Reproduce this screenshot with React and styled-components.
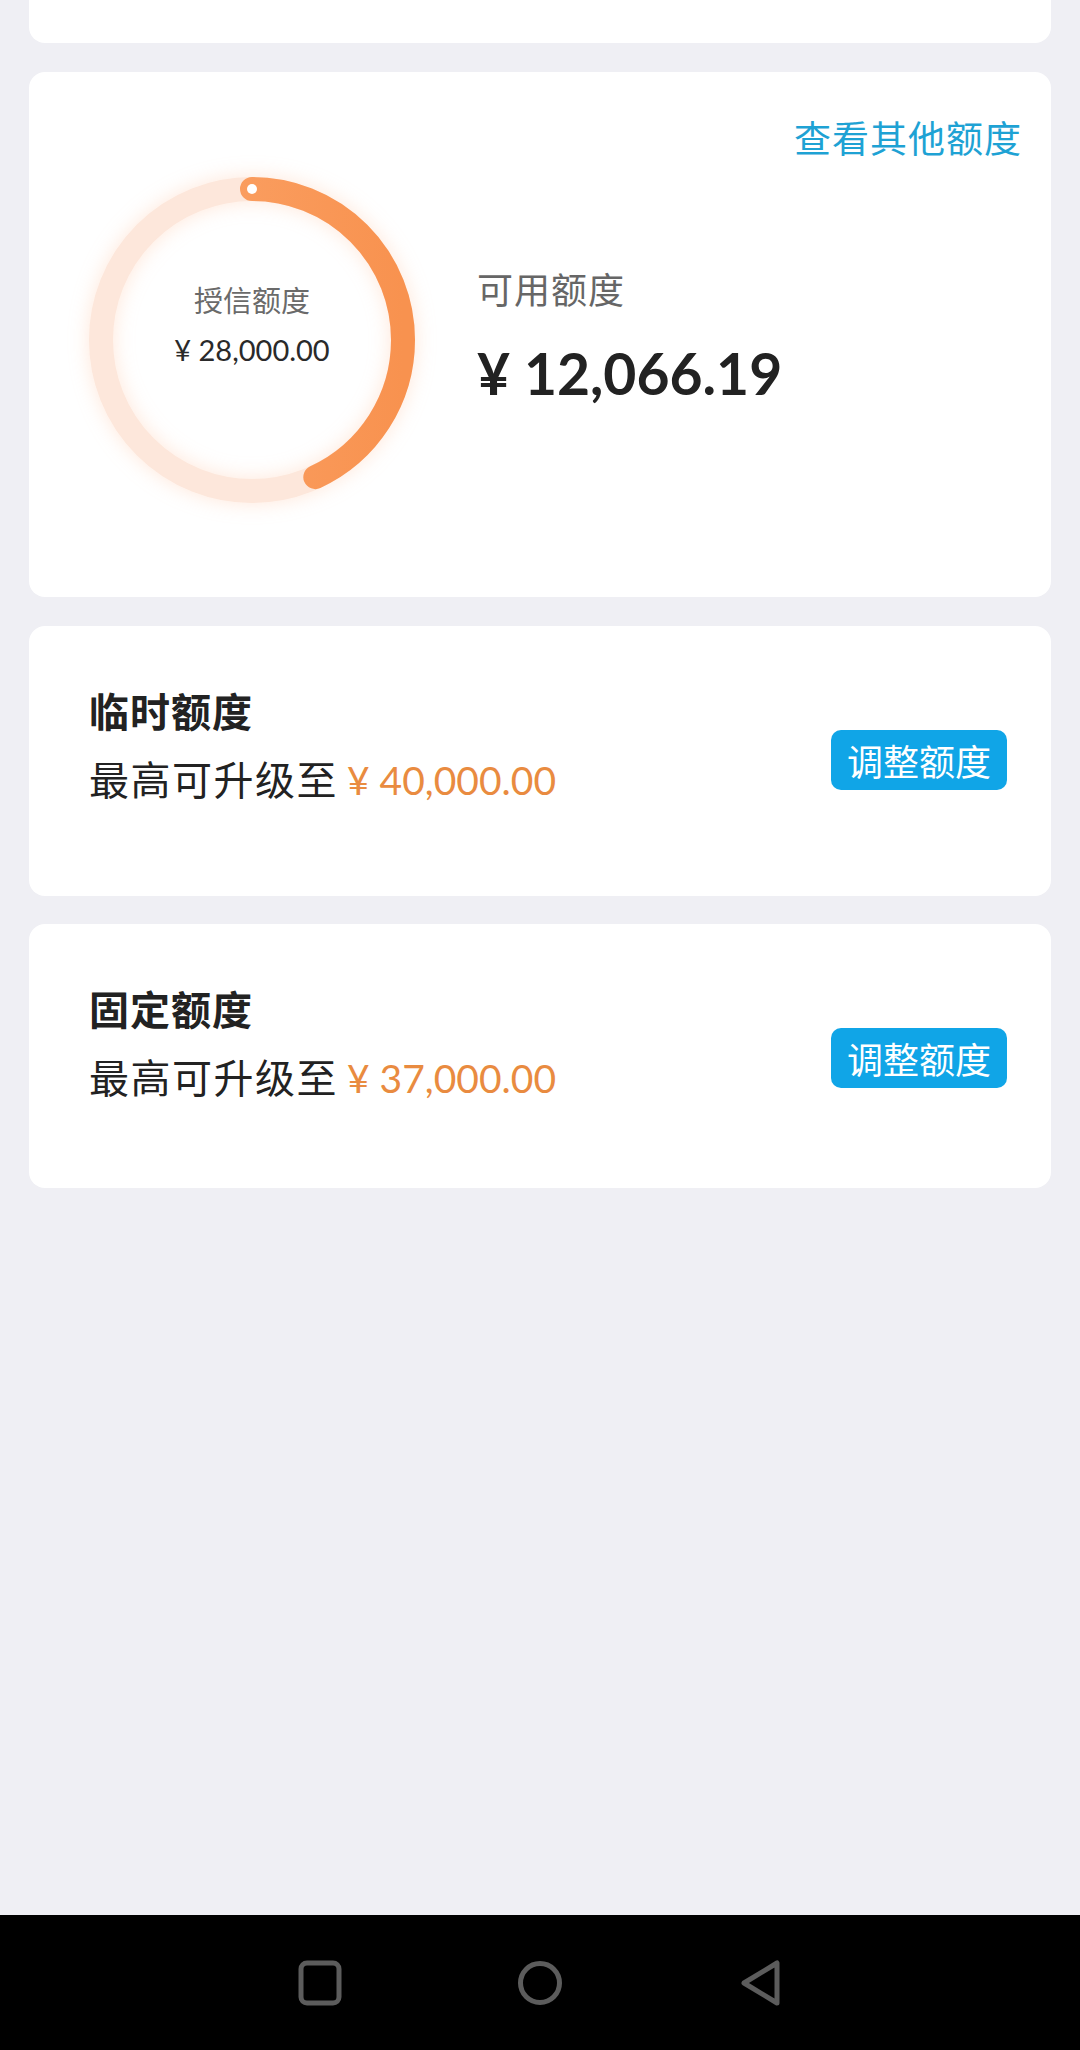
import React from "react";
import styled, { createGlobalStyle } from "styled-components";

const GlobalStyle = createGlobalStyle`
  html, body {
    margin: 0;
    padding: 0;
    background: #efeff4;
  }
  * {
    box-sizing: border-box;
  }
`;

const Page = styled.div`
  display: flex;
  flex-direction: column;
  height: 2050px;
  background: #efeff4;
  font-family: "Lato", "Noto Sans CJK SC", sans-serif;
`;

const Card = styled.div`
  background: #fff;
  border-radius: 16px;
  margin: 0 29px;
`;

const TopCard = styled(Card)`
  height: 43px;
  border-radius: 0 0 16px 16px;
  margin-bottom: 29px;
`;

const QuotaCard = styled(Card)`
  padding: 42px 29px 94px 60px;
  margin-bottom: 29px;
`;

const CardHeader = styled.div`
  display: flex;
  justify-content: flex-end;
`;

const Link = styled.a`
  font-family: "Noto Sans CJK SC", sans-serif;
  font-size: 37px;
  line-height: 46px;
  letter-spacing: 1px;
  color: #1ea2d4;
  text-decoration: none;
`;

const QuotaBody = styled.div`
  display: flex;
  align-items: center;
  margin-top: 17px;
  gap: 62px;
`;

const RingWrap = styled.div`
  display: grid;
  width: 326px;
  height: 326px;

  & > * {
    grid-area: 1 / 1;
  }
`;

const RingSvg = styled.svg`
  overflow: visible;
  filter: drop-shadow(0 0 10px rgba(255, 176, 130, 0.3));
`;

const RingText = styled.div`
  display: flex;
  flex-direction: column;
  align-items: center;
  justify-content: center;
  gap: 15px;
  padding-bottom: 31px;
`;

const RingLabel = styled.div`
  font-family: "Noto Sans CJK SC", sans-serif;
  font-size: 29px;
  line-height: 36px;
  color: #6a6a6a;
`;

const RingAmount = styled.div`
  font-size: 29px;
  line-height: 36px;
  color: #2a2a2a;
`;

const Available = styled.div`
  display: flex;
  flex-direction: column;
  gap: 27px;
  margin-bottom: 6px;
`;

const AvailLabel = styled.div`
  font-family: "Noto Sans CJK SC", sans-serif;
  font-size: 36px;
  line-height: 44px;
  letter-spacing: 1px;
  color: #666;
`;

const AvailAmount = styled.div`
  font-size: 57px;
  line-height: 72px;
  font-weight: 700;
  color: #222;
`;

const LimitCard = styled(Card)`
  display: flex;
  align-items: center;
  justify-content: space-between;
  padding: 60px 44px ${(p) => p.$padBottom}px 60px;
  margin-bottom: 28px;
`;

const LimitInfo = styled.div`
  display: flex;
  flex-direction: column;
  gap: 20px;
`;

const LimitTitle = styled.div`
  font-family: "Noto Sans CJK SC", sans-serif;
  font-size: 40px;
  line-height: 48px;
  letter-spacing: 1px;
  font-weight: 700;
  color: #222;
`;

const LimitDesc = styled.div`
  display: flex;
  align-items: baseline;
  gap: 9px;
  height: 48px;
  font-size: 40px;
  line-height: 48px;
  color: #222;
`;

const DescText = styled.span`
  font-family: "Noto Sans CJK SC", sans-serif;
  letter-spacing: 1.5px;
`;

const MaxAmount = styled.span`
  font-size: 39px;
  color: #e98b40;
`;

const AdjustButton = styled.button`
  width: 176px;
  height: 60px;
  margin-top: 31px;
  border: none;
  border-radius: 10px;
  background: #10a5e7;
  color: #fff;
  font-family: "Noto Sans CJK SC", sans-serif;
  font-size: 36px;
  line-height: 60px;
  padding: 0;
`;

const NavBar = styled.div`
  margin-top: auto;
  height: 135px;
  background: #000;
  display: flex;
  align-items: center;
  justify-content: center;
  gap: 172px;
`;

const NavIcon = styled.svg`
  width: 48px;
  height: 48px;
`;

const credit = 28000;
const available = 12066.19;

const Ring = () => {
  const r = 151;
  const c = 2 * Math.PI * r;
  const len = (available / credit) * c;
  return (
    <RingWrap>
      <RingSvg viewBox="0 0 326 326" width="326" height="326">
        <defs>
          <linearGradient id="arc" x1="0" y1="0" x2="0" y2="1">
            <stop offset="0%" stopColor="#fca66c" />
            <stop offset="100%" stopColor="#f8924f" />
          </linearGradient>
        </defs>
        <circle cx="163" cy="163" r={r} fill="none" stroke="#fde7db" strokeWidth="24" />
        <circle
          cx="163"
          cy="163"
          r={r}
          fill="none"
          stroke="url(#arc)"
          strokeWidth="24"
          strokeLinecap="round"
          strokeDasharray={`${len} ${c}`}
          transform="rotate(-90 163 163)"
        />
        <circle cx="163" cy="12" r="5" fill="#fff" />
      </RingSvg>
      <RingText>
        <RingLabel>授信额度</RingLabel>
        <RingAmount>¥ 28,000.00</RingAmount>
      </RingText>
    </RingWrap>
  );
};

const limits = [
  { title: "临时额度", max: "40,000.00", pad: 94 },
  { title: "固定额度", max: "37,000.00", pad: 88 },
];

export default function App() {
  return (
    <Page>
      <GlobalStyle />
      <TopCard />
      <QuotaCard>
        <CardHeader>
          <Link>查看其他额度</Link>
        </CardHeader>
        <QuotaBody>
          <Ring />
          <Available>
            <AvailLabel>可用额度</AvailLabel>
            <AvailAmount>¥ 12,066.19</AvailAmount>
          </Available>
        </QuotaBody>
      </QuotaCard>
      {limits.map((l) => (
        <LimitCard key={l.title} $padBottom={l.pad}>
          <LimitInfo>
            <LimitTitle>{l.title}</LimitTitle>
            <LimitDesc>
              <DescText>最高可升级至</DescText>
              <MaxAmount>¥ {l.max}</MaxAmount>
            </LimitDesc>
          </LimitInfo>
          <AdjustButton>调整额度</AdjustButton>
        </LimitCard>
      ))}
      <NavBar>
        <NavIcon viewBox="0 0 48 48">
          <rect x="5" y="4" width="38" height="40" rx="6" fill="none" stroke="#5c5c5c" strokeWidth="5" />
        </NavIcon>
        <NavIcon viewBox="0 0 48 48">
          <circle cx="24" cy="24" r="19.5" fill="none" stroke="#5c5c5c" strokeWidth="5" />
        </NavIcon>
        <NavIcon viewBox="0 0 48 48">
          <path d="M41 4 L41 44 L8 24 Z" fill="none" stroke="#5c5c5c" strokeWidth="5" strokeLinejoin="round" />
        </NavIcon>
      </NavBar>
    </Page>
  );
}
